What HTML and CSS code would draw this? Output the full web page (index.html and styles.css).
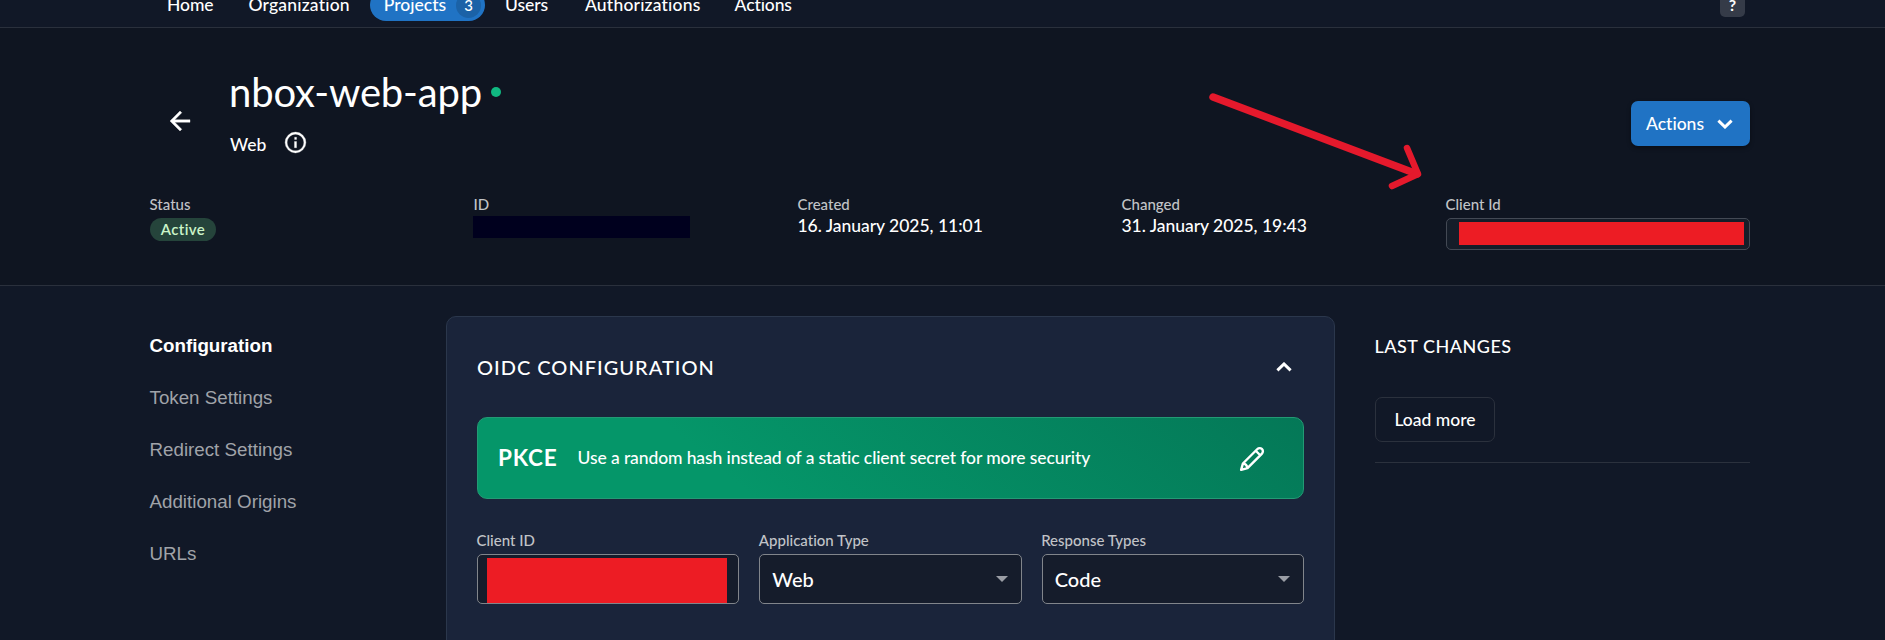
FILE: index.html
```html
<!DOCTYPE html>
<html lang="en">
<head>
<meta charset="utf-8">
<title>nbox-web-app</title>
<link rel="stylesheet" href="styles.css">
</head>
<body>
<nav class="nav">
  <a class="nav-link home">Home</a>
  <a class="nav-link wide">Organization</a>
  <a class="nav-link active"><span>Projects</span><span class="count">3</span></a>
  <a class="nav-link users">Users</a>
  <a class="nav-link wide">Authorizations</a>
  <a class="nav-link last">Actions</a>
  <span class="help">?</span>
</nav>
<header class="top">
  <div class="title-row">
    <svg class="back" viewBox="0 0 24 24"><path d="M20 11H7.830l5.590-5.590L12 4l-8 8 8 8 1.410-1.410L7.830 13H20v-2z"/></svg>
    <div class="titles">
      <h1 class="title">nbox-web-app<span class="dot"></span></h1>
      <div class="sub"><span>Web</span>
        <svg class="info-icon" viewBox="0 0 24 24"><path d="M11 9h2V7h-2m1 13c-4.410 0-8-3.590-8-8s3.590-8 8-8 8 3.590 8 8-3.590 8-8 8m0-18A10 10 0 0 0 2 12a10 10 0 0 0 10 10 10 10 0 0 0 10-10A10 10 0 0 0 12 2m-1 15h2v-6h-2v6z"/></svg>
      </div>
    </div>
    <button class="actions">Actions<svg class="chev" viewBox="0 0 16 10"><path d="M1.400 1.600 8 8l6.600-6.400"/></svg></button>
  </div>
  <div class="facts">
    <div><p class="label">Status</p><span class="state">Active</span></div>
    <div><p class="label">ID</p><div class="id-mask"></div></div>
    <div><p class="label">Created</p><p class="value">16. January 2025, 11:01</p></div>
    <div><p class="label">Changed</p><p class="value">31. January 2025, 19:43</p></div>
    <div><p class="label">Client Id</p><div class="copy"><div class="mask"></div></div></div>
  </div>
  <svg class="pointer" viewBox="0 0 220 104"><path class="shaft" d="M8 9 212 86"/><path class="head" d="M202 60 213 86 187 98"/></svg>
</header>
<main class="content">
  <aside class="side">
    <a class="side-link current">Configuration</a>
    <a class="side-link">Token Settings</a>
    <a class="side-link">Redirect Settings</a>
    <a class="side-link">Additional Origins</a>
    <a class="side-link">URLs</a>
  </aside>
  <section class="card">
    <div class="card-head"><h2 class="card-title">OIDC CONFIGURATION</h2>
      <svg class="chev up" viewBox="0 0 16 10"><path d="M1.400 8.400 8 2l6.600 6.400"/></svg></div>
    <div class="method">
      <span class="method-name">PKCE</span>
      <span class="method-text">Use a random hash instead of a static client secret for more security</span>
      <svg class="pencil" viewBox="0 0 32 32"><path d="M24.300 4.400c-1 0-2 .4-2.800 1.200L6.300 20.800 4.400 27.600l6.800-1.900L26.400 10.500c1.600-1.600 1.600-4 .1-5.300-.6-.5-1.400-.8-2.200-.8zM20 7.200l4.800 4.800M6.300 20.800c2.500.3 4.500 2.300 4.900 4.900"/></svg>
    </div>
    <div class="fields">
      <div><p class="label">Client ID</p><div class="box masked"><div class="mask"></div></div></div>
      <div><p class="label">Application Type</p><div class="box select">Web<span class="caret"></span></div></div>
      <div><p class="label">Response Types</p><div class="box select">Code<span class="caret"></span></div></div>
    </div>
  </section>
  <aside class="changes">
    <h3 class="changes-title">LAST CHANGES</h3>
    <button class="more">Load more</button>
    <div class="rule"></div>
  </aside>
</main>
</body>
</html>
```
FILE: styles.css
```css
* { box-sizing: border-box; margin: 0; padding: 0; }
body { width: 1885px; height: 640px; overflow: hidden; background: #111827; color: #fff; font: 500 17.5px/21px Lato, "Liberation Sans", sans-serif; font-variant-ligatures: none; display: flex; flex-direction: column; }
svg { display: block; flex: none; }
button { font: inherit; color: inherit; border: 0; background: none; }

.nav { height: 28px; flex: none; border-bottom: 1px solid #2a303c; padding: 0 140px 0 147px; display: flex; align-items: flex-start; overflow: hidden; }
.nav-link { margin-top: -11px; height: 32px; line-height: 32px; padding: 0 20px; letter-spacing: -0.1px; }
.nav-link.home { padding-right: 15px; }
.nav-link.wide { letter-spacing: .2px; }
.nav-link.active { background: #2073c4; border-radius: 16px; display: flex; align-items: center; padding: 0 4px 0 14px; gap: 10px; letter-spacing: 0; }
.nav-link.users { padding-right: 17px; }
.nav-link.last { padding-left: 14px; }
.count { width: 25px; height: 25px; line-height: 25px; border-radius: 50%; background: #1b62a7; text-align: center; font-size: 15px; }
.help { margin: -8px 0 0 auto; width: 25px; height: 25px; line-height: 25px; border-radius: 5px; background: #353b48; text-align: center; font-size: 16px; font-weight: 700; }

.top { height: 258px; flex: none; background: #0f1521; border-bottom: 1px solid #2a303c; padding: 43px 135px 0 149px; position: relative; }
.title-row { display: flex; height: 120px; align-items: flex-start; padding-left: 16px; }
.back { width: 30px; height: 30px; margin-top: 35px; fill: #fff; stroke: #fff; stroke-width: .3; }
.titles { margin-left: 35px; flex: 1; }
.title { font-size: 40px; line-height: 42px; font-weight: 400; letter-spacing: -.15px; margin-left: -1px; display: flex; align-items: center; gap: 9px; }
.dot { width: 10px; height: 10px; border-radius: 50%; background: #10b981; }
.sub { display: flex; margin-top: 16px; gap: 17px; }
.sub span { line-height: 32px; }
.info-icon { width: 25px; height: 25px; margin-top: .5px; fill: #fff; stroke: #fff; stroke-width: .3; }
.actions { width: 119px; height: 45px; margin-top: 30px; border-radius: 7px; background: #2073c4; box-shadow: 0 2px 4px rgba(0,0,0,.4); display: flex; align-items: center; justify-content: space-between; padding: 0 17.5px 0 15px; }
.chev { width: 16px; height: 10px; fill: none; stroke: #fff; stroke-width: 3; }
.facts { display: grid; grid-template-columns: repeat(5, 304px); gap: 20px; margin-top: 2px; }
.facts .label, .value { padding-left: .5px; }
.label { font-size: 15px; line-height: 22px; color: #c1c3c7; }
.value { line-height: 21px; letter-spacing: -.03px; }
.state { display: block; width: 66px; height: 23px; margin: 3px 0 0 1px; border-radius: 12px; background: #25443b; color: #cbf4c9; font-size: 15px; font-weight: 600; line-height: 22px; text-align: center; letter-spacing: .4px; }
.id-mask { width: 217px; height: 22px; margin-top: 1px; background: #00001e; }
.copy { height: 32px; margin: 3px -1px 0 1px; border: 1px solid #434954; border-radius: 5px; background: #151d29; padding: 3px 5px 4px 12px; }
.mask { height: 100%; background: #ed1c24; }
.pointer { position: absolute; left: 1205px; top: 60px; width: 220px; height: 104px; fill: none; stroke: #e5192c; stroke-linecap: round; stroke-linejoin: round; }
.shaft { stroke-width: 7.500; }
.head { stroke-width: 6.500; }

.content { flex: 1; display: grid; grid-template-columns: 257px 889px 375px; gap: 40px; padding: 30px 135px 0 149px; }
.side { padding: 4px 0 0 .5px; font-family: "Liberation Sans", Arial, sans-serif; font-size: 18.75px; font-weight: 400; color: #a0a3a9; }
.side-link { display: block; height: 52px; line-height: 52px; }
.current { color: #fff; font-weight: 700; }
.card { height: 340px; border: 1px solid #2b374c; border-radius: 10px; background: #1a243a; padding: 30px 30px 0; }
.card-head { height: 70px; display: flex; justify-content: space-between; padding: 8px 12.5px 0 0; }
.card-title { font-size: 20px; line-height: 24px; font-weight: 500; letter-spacing: 1px; }
.chev.up { margin-top: 7px; }
.method { height: 82px; border: 1px solid #239a74; border-radius: 10px; background: linear-gradient(40deg, #059669 30%, #047857); display: flex; align-items: center; padding: 0 36px 2px 20px; }
.method-name { font-size: 22.5px; font-weight: 700; letter-spacing: .8px; }
.method-text { margin-left: 20px; letter-spacing: -.1px; }
.pencil { width: 30px; height: 30px; margin: 3px 0 0 auto; fill: none; stroke: #fff; stroke-width: 2.600; stroke-linejoin: round; }
.fields { display: grid; grid-template-columns: repeat(3, 1fr); gap: 20px; margin-top: 30px; }
.fields .label { margin-left: -.5px; }
.box { height: 50px; margin-top: 3px; border: 1px solid #81858b; border-radius: 5px; background: #151c2b; }
.masked { padding: 3px 11px 0 9px; }
.select { display: flex; align-items: center; justify-content: space-between; padding: 0 13px 0 12px; font-size: 20px; }
.caret { border: 6.500px solid transparent; border-top-color: #9a9da5; border-bottom: 0; }
.changes { padding-top: 19px; }
.changes-title { font-size: 18px; line-height: 22px; font-weight: 500; letter-spacing: .5px; margin-left: -.5px; }
.more { display: block; width: 120px; height: 45px; margin-top: 40px; border: 1px solid #2b313d; border-radius: 7px; }
.rule { height: 1px; margin-top: 20px; background: #2b313d; }
```
